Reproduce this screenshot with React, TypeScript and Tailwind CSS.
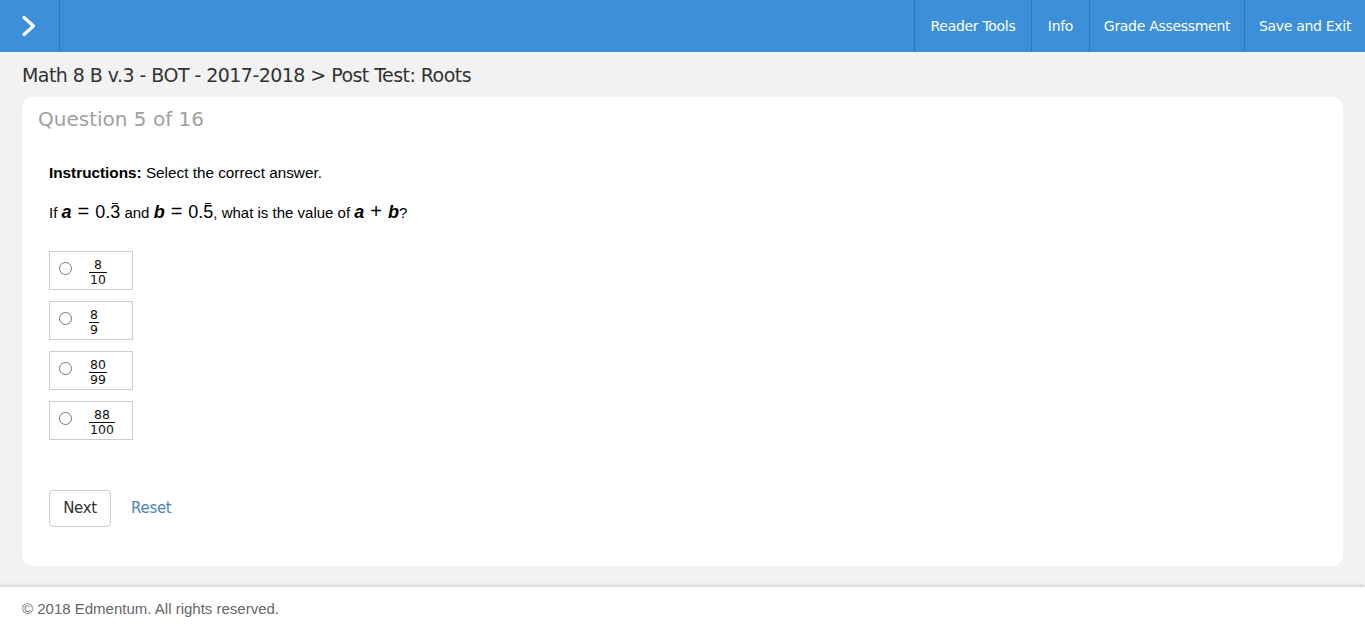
import React from "react";

function Frac({ n, d }: { n: string; d: string }) {
  return (
    <span className="inline-flex flex-col items-center text-[12.5px] leading-[14px] text-[#111]" style={{ fontFamily: '"DejaVu Sans", sans-serif' }}>
      <span className="px-[1px]">{n}</span>
      <span className="self-stretch border-t border-[#111]" />
      <span className="px-[1px]">{d}</span>
    </span>
  );
}

function Option({ n, d }: { n: string; d: string }) {
  return (
    <div className="flex h-[39px] w-[84px] items-center border border-[#cccccc] bg-white pb-[4px] pl-[9px]">
      <span className="h-[13px] w-[13px] rounded-full border border-[#767676] bg-white" />
      <span className="ml-[17px] mt-[2px]"><Frac n={n} d={d} /></span>
    </div>
  );
}

function V({ c }: { c: string }) {
  return <b className="italic text-[18px]">{c}</b>;
}

function Op({ c }: { c: string }) {
  return <span className="mx-[6px] inline-block text-[20px] leading-[16px]">{c}</span>;
}

function Rep({ c }: { c: string }) {
  return (
    <span className="relative inline-block">
      {c}
      <span className="absolute left-[2px] right-[2px] top-[1px] border-t border-black" />
    </span>
  );
}

export default function App() {
  const navItems = [
    { t: "Reader Tools", w: "w-[117px]" },
    { t: "Info", w: "w-[58px]" },
    { t: "Grade Assessment", w: "w-[155px]" },
    { t: "Save and Exit", w: "w-[121px]" },
  ];
  const dv = { fontFamily: '"DejaVu Sans", sans-serif' };
  return (
    <div className="flex min-h-[630px] flex-col bg-[#f2f2f2]" style={{ fontFamily: '"Liberation Sans", Arial, sans-serif' }}>
      <header className="flex h-[52px] items-stretch bg-[#3c8fd9]">
        <div className="flex w-[60px] items-center justify-center border-r border-[#2f77bd] bg-[#3c8fd9]">
          <svg width="20" height="24" viewBox="0 0 20 24" className="-ml-[1px]">
            <path d="M5 3.5 L14.5 12 L5 20.5" fill="none" stroke="white" strokeWidth="3.2" strokeLinecap="round" strokeLinejoin="round" />
          </svg>
        </div>
        <div className="flex-1" />
        <nav className="flex items-stretch">
          {navItems.map((n) => (
            <div key={n.t} className={`${n.w} flex items-center justify-center border-l border-[#2f77bd] pt-[1px] text-[14px] text-white`} style={{ ...dv, letterSpacing: "-0.3px" }}>
              {n.t}
            </div>
          ))}
        </nav>
      </header>

      <div className="px-[22px]">
        <h1 className="pt-[10px] pb-[9px] text-[19px] leading-[26px] text-[#333]" style={{ ...dv, letterSpacing: "-0.55px" }}>
          Math 8 B v.3 - BOT - 2017-2018 &gt; Post Test: Roots
        </h1>
        <div className="h-[469px] rounded-[10px] bg-white px-[16px] pt-[9px]">
          <div className="text-[20px] leading-[26px] text-[#a0a0a0]" style={{ ...dv, letterSpacing: "0px" }}>
            Question 5 of 16
          </div>
          <div className="pl-[11px]">
            <p className="mt-[33px] text-[15.3px] leading-[16px] text-black">
              <b>Instructions:</b> Select the correct answer.
            </p>
            <p className="mt-[21px] text-[15px] leading-[20px] text-black">
              If <V c="a" /><Op c="=" /><span className="text-[18px]">0.<Rep c="3" /></span> and <V c="b" /><Op c="=" />
              <span className="text-[18px]">0.<Rep c="5" /></span>, what is the value of <V c="a" /><Op c="+" /><V c="b" />?
            </p>
            <div className="mt-[28px] flex flex-col gap-[11px]">
              <Option n="8" d="10" />
              <Option n="8" d="9" />
              <Option n="80" d="99" />
              <Option n="88" d="100" />
            </div>
            <div className="mt-[50px] flex items-center gap-[20px]">
              <button className="h-[37px] w-[62px] rounded-[4px] border border-[#cccccc] bg-white text-[15px] text-[#333]" style={{ ...dv, letterSpacing: "-0.3px" }}>
                Next
              </button>
              <span className="text-[15px] text-[#4a84b5]" style={{ ...dv, letterSpacing: "-0.3px" }}>
                Reset
              </span>
            </div>
          </div>
        </div>
      </div>

      <footer className="mt-[21px] flex-1 bg-white px-[22px] pt-[11px] shadow-[0_-2px_3px_rgba(0,0,0,0.12)]">
        <p className="text-[15px] text-[#666]">© 2018 Edmentum. All rights reserved.</p>
      </footer>
    </div>
  );
}
